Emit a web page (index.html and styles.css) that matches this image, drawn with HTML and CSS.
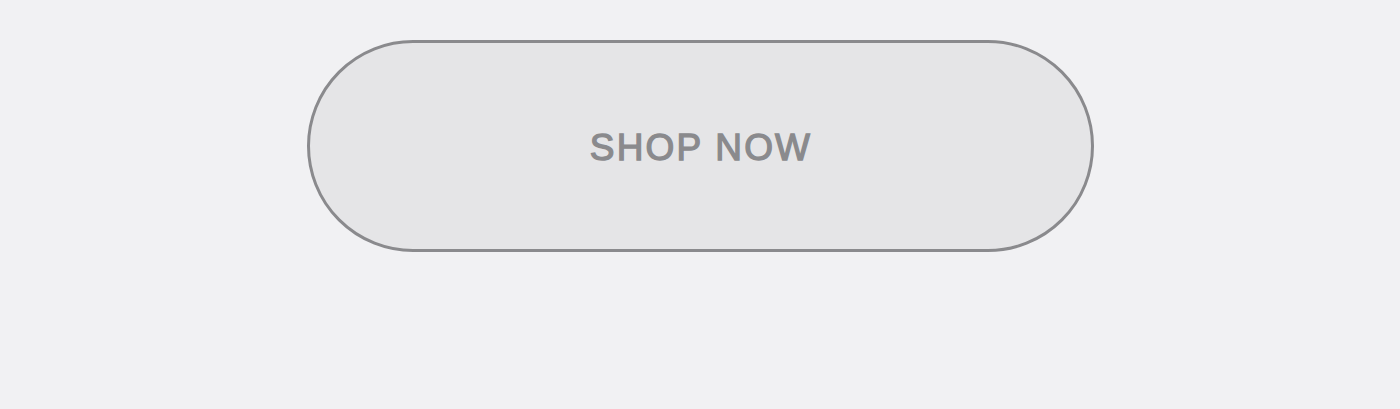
FILE: index.html
```html
<!DOCTYPE html>
<html>
<head>
<meta charset="utf-8">
<link rel="stylesheet" href="styles.css">
</head>
<body>
<div class="page">
  <button class="shop-btn">SHOP NOW</button>
</div>
</body>
</html>
```
FILE: styles.css
```css
html, body {
  margin: 0;
  padding: 0;
  background: #f1f1f3;
}
.page {
  height: 409px;
  display: flex;
  justify-content: center;
  align-items: flex-start;
  padding-top: 40px;
  box-sizing: border-box;
}
.shop-btn {
  width: 787px;
  height: 212px;
  box-sizing: border-box;
  border: 3px solid #8a8a8d;
  border-radius: 106px;
  background: #e5e5e7;
  color: #8a8a8d;
  font-family: "Liberation Sans", Arial, sans-serif;
  font-weight: 400;
  -webkit-text-stroke: 1.3px #8a8a8d;
  font-size: 37px;
  letter-spacing: 2.2px;
  padding: 3px 0 0 2px;
  cursor: pointer;
}
```
